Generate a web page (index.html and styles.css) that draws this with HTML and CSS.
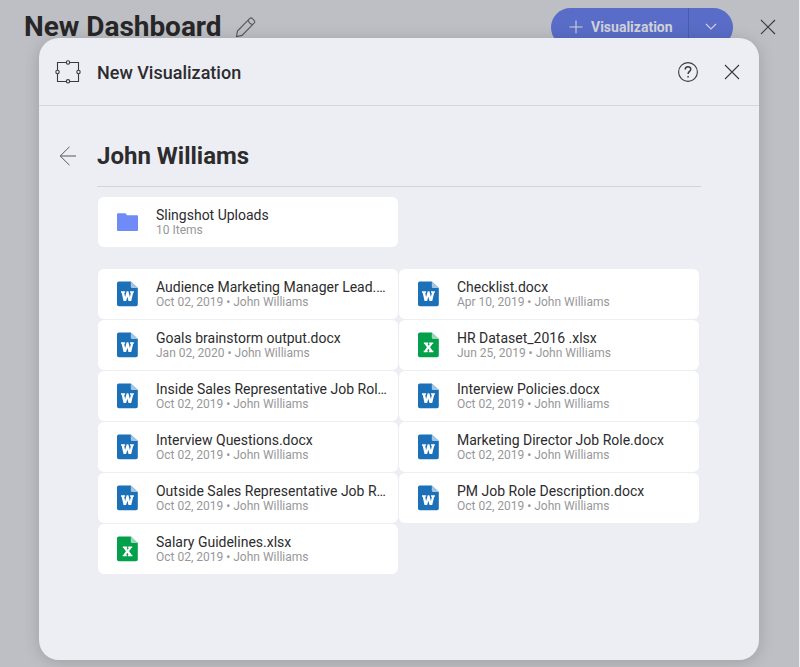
FILE: index.html
```
<!DOCTYPE html>
<html lang="en">
<head>
<meta charset="utf-8">
<title>New Dashboard</title>
<link rel="stylesheet" href="styles.css">
</head>
<body>
<svg class="defs" width="0" height="0" aria-hidden="true">
  <symbol id="doc" viewBox="0 0 21 26"><path fill="currentColor" d="M1.800 .4H13.800l7 6.600v16.500a1.800 1.800 0 0 1-1.800 1.800H1.800A1.800 1.800 0 0 1 0 23.500V2.200A1.800 1.800 0 0 1 1.800 .4z"/><path class="fold" d="M13.800 .4l7 6.600h-5.800a1.200 1.200 0 0 1-1.200-1.200z"/></symbol>
  <symbol id="word" viewBox="0 0 21 26"><use href="#doc"/><path fill="#fff" d="M4 10.300h4.100v1.500h-.9l.9 4.200 1.600-5.700h1.700l1.500 5.700 1-4.200h-.9v-1.500h3.900v1.500h-.7l-2 8.200h-2.700l-1.100-4.300-1.300 4.300H6.500l-1.800-8.200H4z"/></symbol>
  <symbol id="excel" viewBox="0 0 21 26"><use href="#doc"/><path fill="#fff" d="M5.900 10.500h4.300v1.500h-.6l1.100 1.700 1.100-1.700h-.6v-1.500h4v1.500h-.8l-2.300 3.300 2.500 3.400h.8v1.500h-4.500v-1.500h.7l-1.300-1.900-1.200 1.900h.6v1.500h-4v-1.500h.8l2.400-3.500-2.300-3.200h-.7z"/></symbol>
</svg>
<div class="page">
  <header class="topbar">
    <h1>New Dashboard</h1>
    <svg class="pencil" width="22" height="22" viewBox="0 0 22 22"><path d="M1.500 20.500l.9-5.400L14.600 2.600q1.400-1.300 2.800 0l1.700 1.700q1.300 1.400 0 2.800L7 19.400zM13.200 4.100q.8 3.600 4.500 4.500"/></svg>
    <div class="split">
      <div class="add"><svg width="14" height="14" viewBox="0 0 14 14"><path d="M7 .5v13M.5 7h13"/></svg><span>Visualization</span></div>
      <div class="more"><svg width="12" height="8" viewBox="0 0 12 8"><path d="M1 1l5 5 5-5"/></svg></div>
    </div>
    <svg class="close" width="16" height="16" viewBox="0 0 16 16"><path d="M1 1l14 14M15 1L1 15"/></svg>
  </header>
  <section class="modal">
    <div class="modal-head">
      <svg class="frame" width="26" height="24" viewBox="0 0 26 24"><path d="M2.500 10V2.500h8.800M14.700 2.500h8.800V10M23.500 14v7.500h-8.800M11.300 21.500H2.500V14"/><circle cx="13" cy="2.500" r="1.700"/><circle cx="13" cy="21.300" r="1.700"/><circle cx="2.500" cy="12" r="1.700"/><circle cx="23.500" cy="12" r="1.700"/></svg>
      <h2>New Visualization</h2>
      <svg class="help" width="22" height="22" viewBox="0 0 22 22"><circle cx="11" cy="11" r="9.400"/><path class="q" d="M8.200 8.600c0-3.600 5.600-3.600 5.600-.3 0 2-2.700 2.300-2.700 4.600M11.100 15v1.500"/></svg>
      <svg class="close" width="16" height="16" viewBox="0 0 16 16"><path d="M1 1l14 14M15 1L1 15"/></svg>
    </div>
    <div class="title">
      <svg class="back" width="18" height="20" viewBox="0 0 18 20"><path d="M10.500 .8L1.200 10l9.300 9.200M1.200 10H17"/></svg>
      <h3>John Williams</h3>
    </div>
    <div class="content">
      <div class="card folder"><svg class="icon" width="21" height="26" viewBox="0 0 21 26"><path fill="#6f8bf7" d="M1 4.200h7.300l1.900 2.100H20a1 1 0 0 1 1 1V21a1 1 0 0 1-1 1H1a1 1 0 0 1-1-1V5.200a1 1 0 0 1 1-1z"/></svg><div class="text"><div class="name">Slingshot Uploads</div><div class="meta">10 Items</div></div></div>
      <div class="grid">
        <div class="card"><svg class="icon word"><use href="#word"/></svg><div class="text"><div class="name">Audience Marketing Manager Lead.docx</div><div class="meta">Oct 02, 2019 • John Williams</div></div></div>
        <div class="card"><svg class="icon word"><use href="#word"/></svg><div class="text"><div class="name">Checklist.docx</div><div class="meta">Apr 10, 2019 • John Williams</div></div></div>
        <div class="card"><svg class="icon word"><use href="#word"/></svg><div class="text"><div class="name">Goals brainstorm output.docx</div><div class="meta">Jan 02, 2020 • John Williams</div></div></div>
        <div class="card"><svg class="icon excel"><use href="#excel"/></svg><div class="text"><div class="name">HR Dataset_2016 .xlsx</div><div class="meta">Jun 25, 2019 • John Williams</div></div></div>
        <div class="card"><svg class="icon word"><use href="#word"/></svg><div class="text"><div class="name">Inside Sales Representative Job Role.docx</div><div class="meta">Oct 02, 2019 • John Williams</div></div></div>
        <div class="card"><svg class="icon word"><use href="#word"/></svg><div class="text"><div class="name">Interview Policies.docx</div><div class="meta">Oct 02, 2019 • John Williams</div></div></div>
        <div class="card"><svg class="icon word"><use href="#word"/></svg><div class="text"><div class="name">Interview Questions.docx</div><div class="meta">Oct 02, 2019 • John Williams</div></div></div>
        <div class="card"><svg class="icon word"><use href="#word"/></svg><div class="text"><div class="name">Marketing Director Job Role.docx</div><div class="meta">Oct 02, 2019 • John Williams</div></div></div>
        <div class="card"><svg class="icon word"><use href="#word"/></svg><div class="text"><div class="name">Outside Sales Representative Job Role.docx</div><div class="meta">Oct 02, 2019 • John Williams</div></div></div>
        <div class="card"><svg class="icon word"><use href="#word"/></svg><div class="text"><div class="name">PM Job Role Description.docx</div><div class="meta">Oct 02, 2019 • John Williams</div></div></div>
        <div class="card"><svg class="icon excel"><use href="#excel"/></svg><div class="text"><div class="name">Salary Guidelines.xlsx</div><div class="meta">Oct 02, 2019 • John Williams</div></div></div>
      </div>
    </div>
  </section>
</div>
</body>
</html>
```
FILE: styles.css
```
* { box-sizing: border-box; }
body { margin: 0; background: #f0f0f2; font-family: Roboto, "Liberation Sans", sans-serif; color: #2c2c2e; overflow: hidden; }
h1, h2, h3 { margin: 0; white-space: nowrap; }
svg { display: block; flex: none; fill: none; stroke: #3a3b3e; stroke-width: 1.1; }
.defs { position: absolute; }
.page { position: relative; width: 799px; height: 667px; background: #bebfc4; overflow: hidden; }
.topbar { display: flex; align-items: center; height: 54px; padding: 0 23px 0 24px; }
.topbar h1 { width: 211px; font-size: 28px; font-weight: 700; letter-spacing: -.03px; line-height: 54px; color: #272728; }
.pencil { stroke: #555659; }
.split { display: flex; width: 182px; height: 39px; margin-left: auto; margin-right: 27px; border-radius: 20px; overflow: hidden; background: #596dc8; color: #d1d2d8; font-size: 14px; font-weight: 700; }
.split svg { stroke: #d1d2d8; }
.add { display: flex; align-items: center; width: 138px; padding-left: 18px; gap: 8px; border-right: 1px solid #4a5cab; }
.more { display: flex; flex: 1; align-items: center; justify-content: center; }
.modal { position: absolute; left: 39px; top: 38px; width: 720px; height: 622px; border-radius: 20px; background: #edeef4; box-shadow: 0 2px 16px rgba(0,0,0,.17); }
.modal-head { display: flex; align-items: center; height: 68px; padding: 0 19px 0 16px; border-bottom: 1px solid #d5d6dc; }
.modal-head h2 { margin-left: 16px; padding-top: 2px; font-size: 18px; font-weight: 500; }
.help { margin-left: auto; margin-right: 25px; }
.help .q { stroke-width: 1.500; }
.title { display: flex; align-items: center; height: 80px; padding: 20px 0 0 20px; }
.back { stroke: #55565a; stroke-width: 1; }
.title h3 { margin-left: 20px; font-size: 24px; font-weight: 700; }
.content { width: 604px; margin-left: 58px; border-top: 1px solid #d3d4da; padding: 10px 2px 0 1px; }
.card { display: flex; align-items: center; width: 300px; height: 50px; padding: 0 11px 0 18.600px; border-radius: 6px; background: #fff; }
.icon { width: 21px; height: 26px; stroke: none; }
.word { color: #1b70b8; --fold: #a3c6e3; }
.excel { color: #02a04a; --fold: #9ad9b7; }
.fold { fill: var(--fold); }
.text { flex: 1; min-width: 0; margin-left: 18.400px; }
.name { font-size: 14px; line-height: 16px; white-space: nowrap; overflow: hidden; text-overflow: ellipsis; }
.meta { font-size: 12px; line-height: 14px; color: #97979a; white-space: nowrap; }
.grid { display: grid; grid-template-columns: 300px 300px; gap: 1px; margin-top: 22px; }
```
